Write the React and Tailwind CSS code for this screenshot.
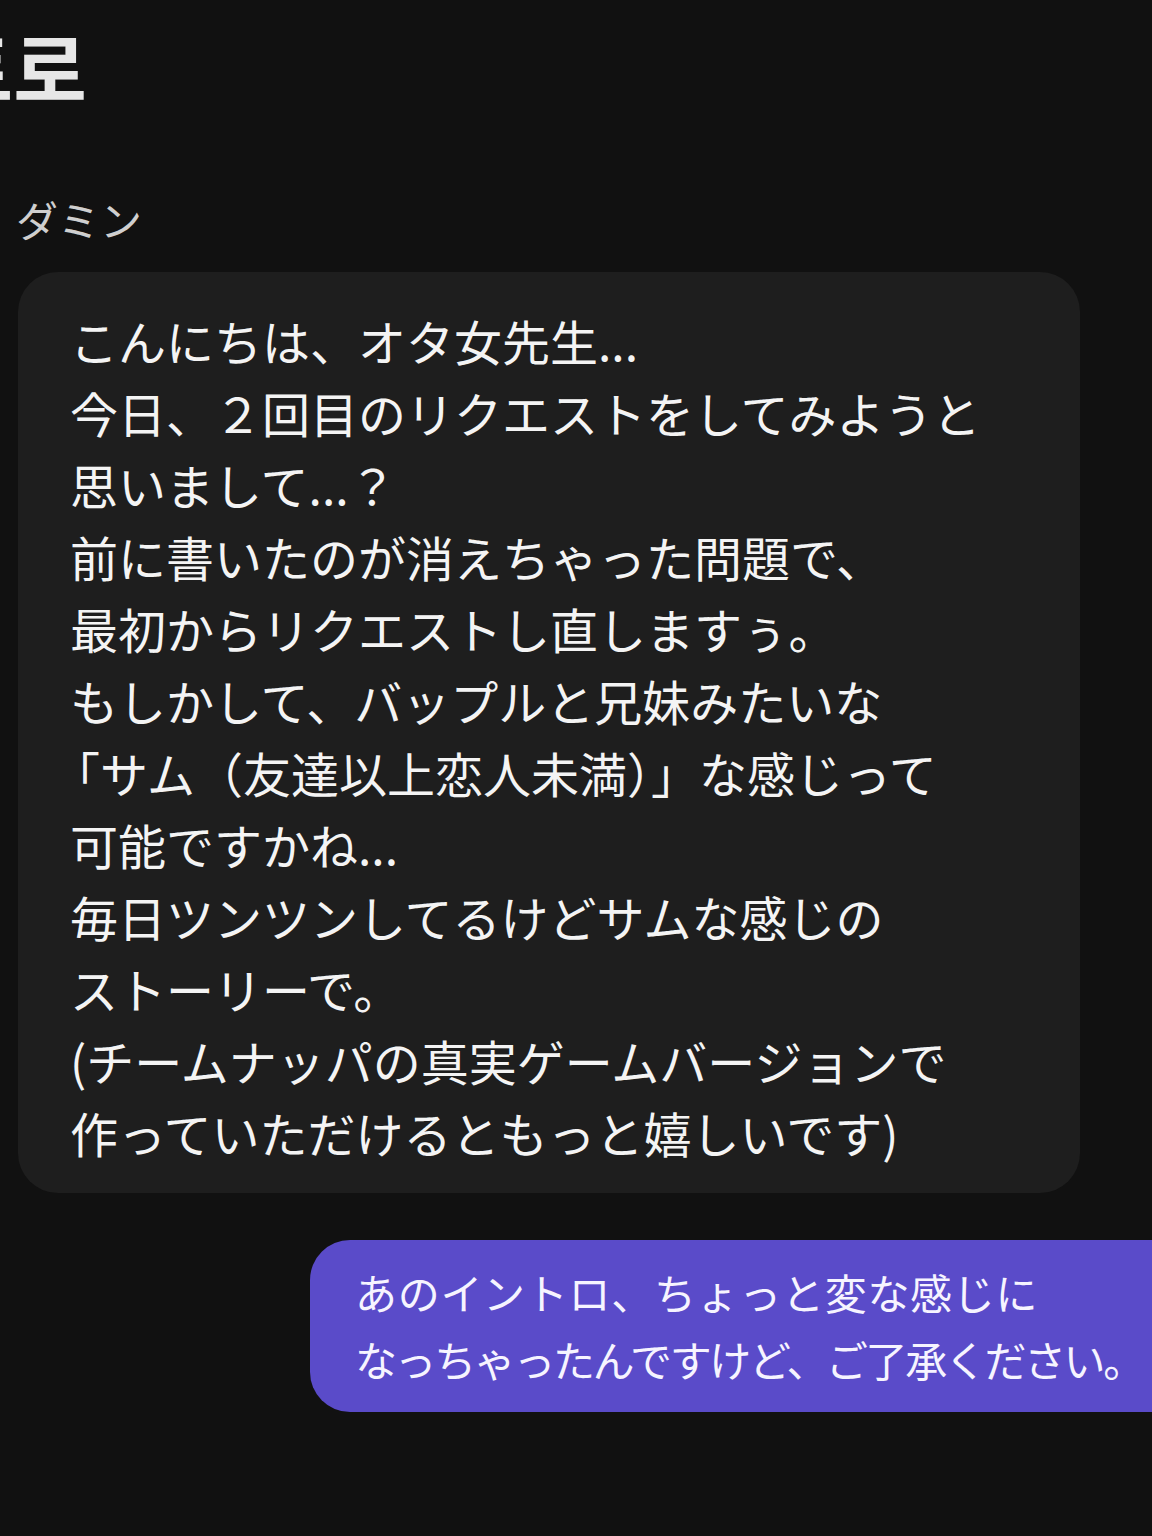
export default function App() {
  const received = [
    { text: "こんにちは、オタ女先生...", cls: "" },
    { text: "今日、２回目のリクエストをしてみようと", cls: "" },
    { text: "思いまして...？", cls: "" },
    { text: "前に書いたのが消えちゃった問題で、", cls: "" },
    { text: "最初からリクエストし直しますぅ。", cls: "" },
    { text: "もしかして、バップルと兄妹みたいな", cls: "" },
    { text: "「サム（友達以上恋人未満）」な感じって", cls: "ml-[-18px]" },
    { text: "可能ですかね...", cls: "" },
    { text: "毎日ツンツンしてるけどサムな感じの", cls: "" },
    { text: "ストーリーで。", cls: "" },
    { text: "(チームナッパの真実ゲームバージョンで", cls: "" },
    { text: "作っていただけるともっと嬉しいです)", cls: "" },
  ];
  return (
    <div
      className="w-[1152px] h-[1536px] overflow-hidden bg-[#111111] text-white"
      style={{ fontFamily: '"Noto Sans CJK JP", "Noto Sans CJK KR", "Noto Sans", sans-serif' }}
    >
      {/* conversation title, partly scrolled off to the left */}
      <div className="h-[130px] flex items-center whitespace-nowrap">
        <span className="ml-[-134px] text-[80px] leading-none font-bold text-[#e6e6e6] [font-family:'Noto_Sans_CJK_KR',sans-serif]">
          인트로
        </span>
      </div>

      {/* sender name */}
      <div className="mt-[60px] h-[56px] flex items-center pl-[16px] text-[42px] text-[#cfcfcf]">
        ダミン
      </div>

      {/* incoming message */}
      <div className="mt-[26px] ml-[18px] w-[1062px] rounded-[40px] bg-[#1e1e1e] pl-[52px] pt-[32px] pb-[25px]">
        {received.map((line, i) => (
          <div key={i} className={`text-[48px] leading-[72px] whitespace-nowrap text-[#f4f4f4] ${line.cls}`}>
            {line.text}
          </div>
        ))}
      </div>

      {/* outgoing message */}
      <div className="mt-[47px] ml-[310px] w-[900px] rounded-l-[40px] bg-[#5a4bc9] pl-[45px] pt-[18px] pb-[20px] text-[42px] leading-[67px] whitespace-nowrap text-[#f6f4ff]">
        <div className="tracking-[0.7px]">あのイントロ、ちょっと変な感じに</div>
        <div className="tracking-[-2.4px]">なっちゃったんですけど、ご了承ください。</div>
      </div>
    </div>
  );
}
